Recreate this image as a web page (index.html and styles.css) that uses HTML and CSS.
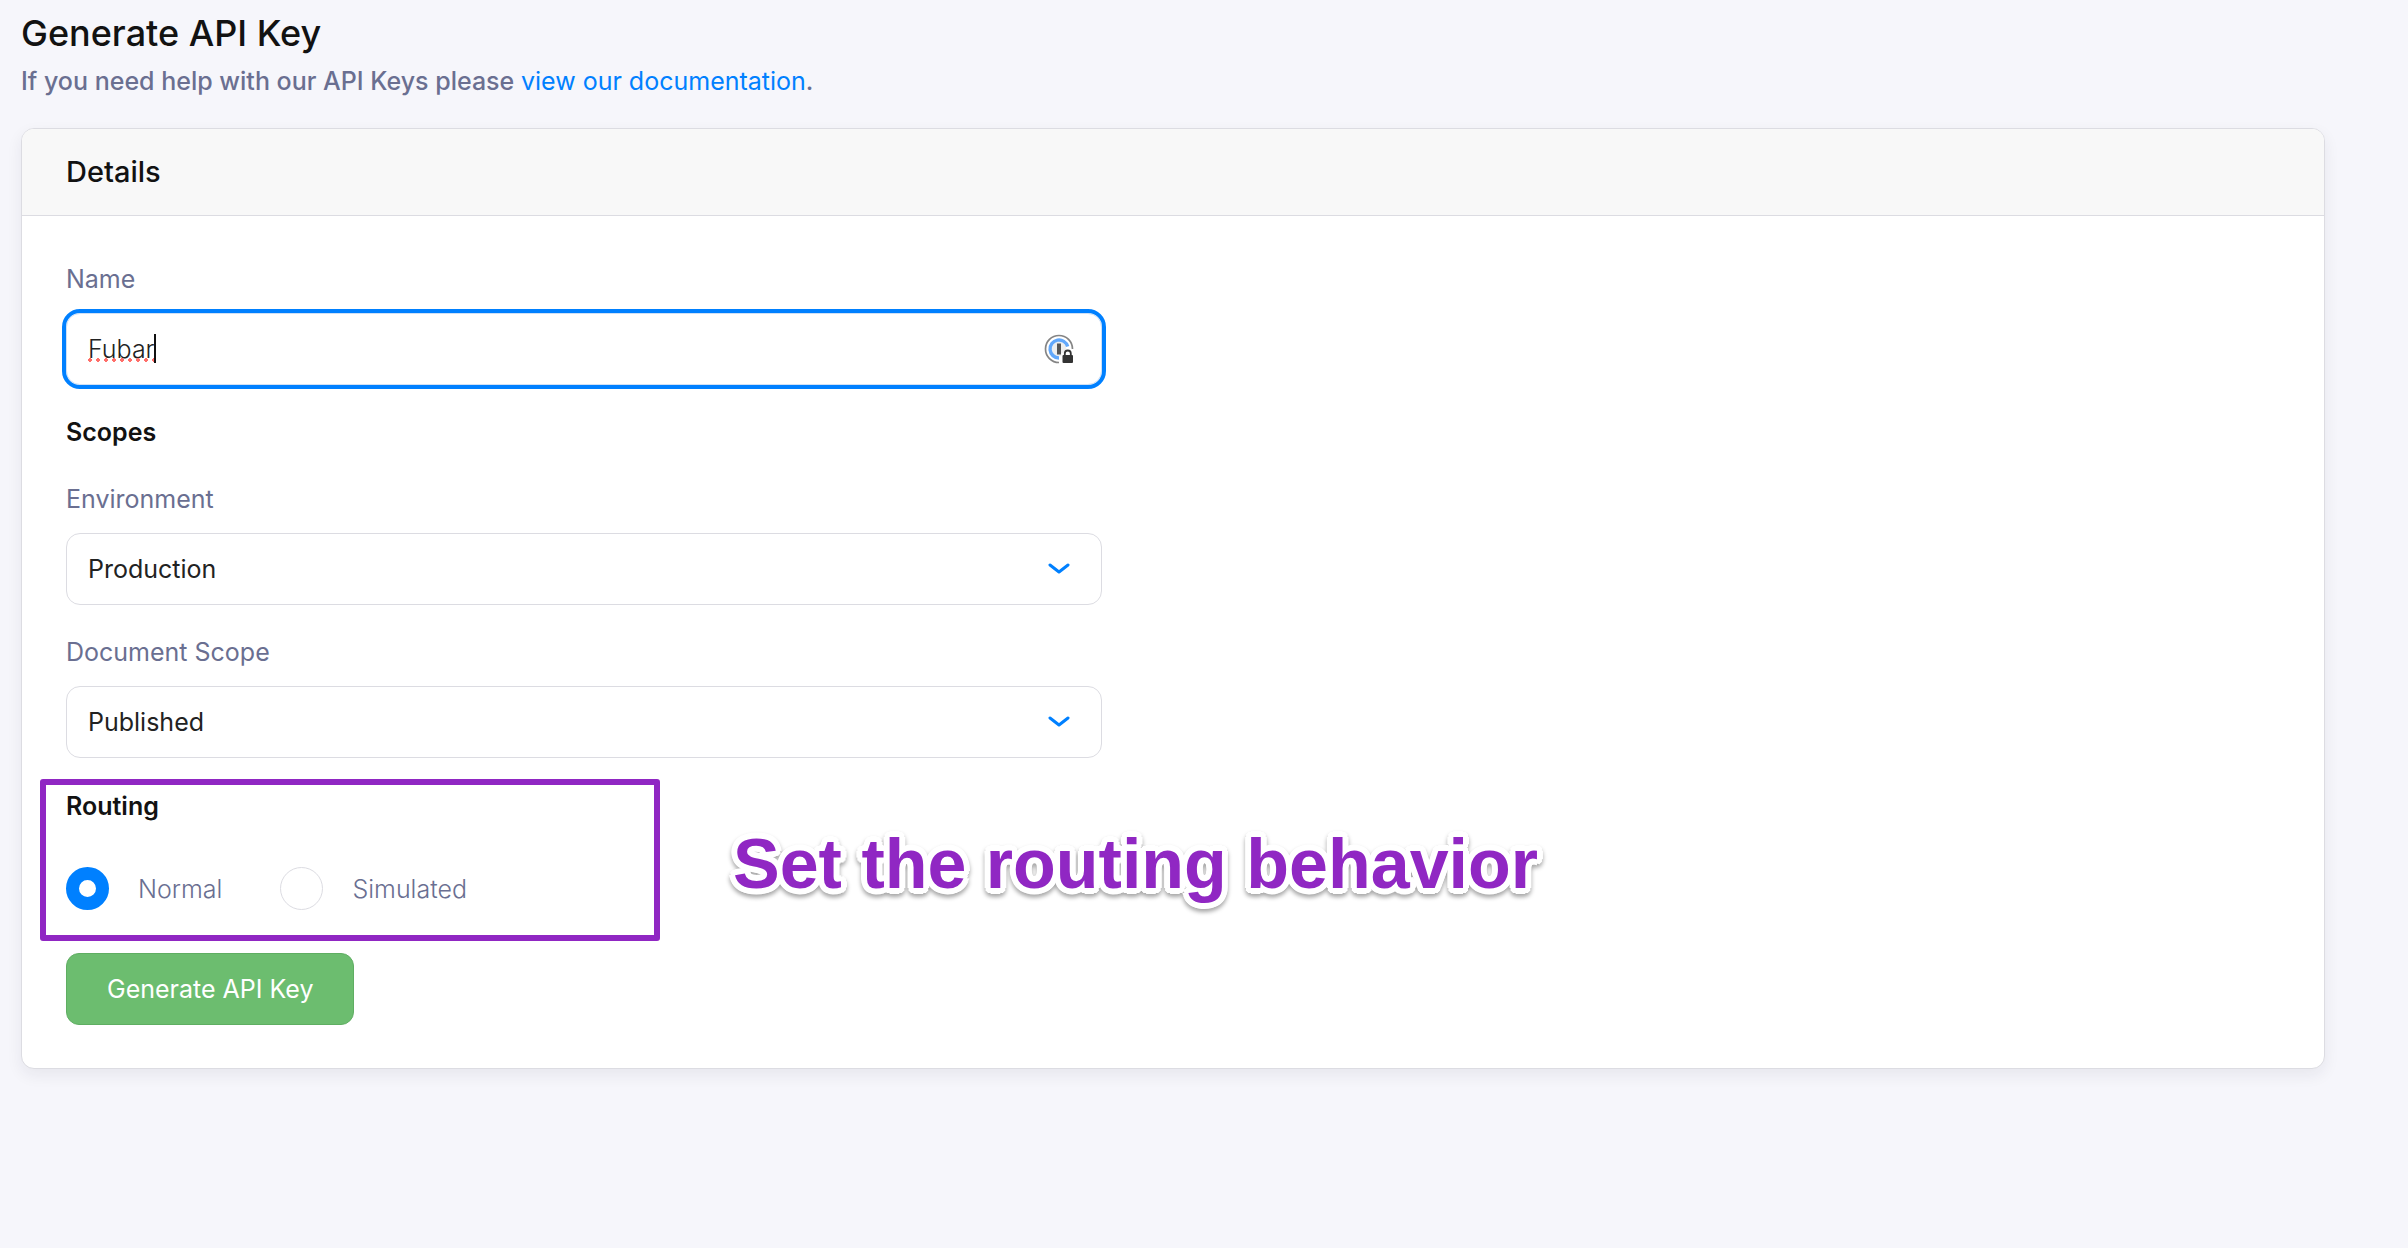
FILE: index.html
```html
<!DOCTYPE html>
<html lang="en">
<head>
<meta charset="utf-8">
<title>Generate API Key</title>
<link rel="stylesheet" href="styles.css">
</head>
<body>
<main class="page">
  <header class="intro">
    <h1>Generate API Key</h1>
    <p>If you need help with our API Keys please <a href="#">view our documentation</a>.</p>
  </header>
  <section class="card">
    <h2 class="card-header">Details</h2>
    <form class="card-body">
      <div class="field">
        <label for="name">Name</label>
        <div class="control">
          <input class="box name-input" id="name" type="text" value="Fubar">
          <span class="spelling-mark"></span>
          <svg class="password-icon" viewBox="0 0 30 30" aria-hidden="true">
            <path d="M15 28.500A13.500 13.500 0 1 1 28.500 15" fill="none" stroke="#858585" stroke-width="1.700"/>
            <circle cx="15" cy="15" r="7.500" fill="#eee"/>
            <path d="M15 24A9 9 0 1 1 23.700 12.500" fill="none" stroke="#62a8fb" stroke-width="3.400"/>
            <rect x="13" y="9.500" width="4" height="11" fill="#555"/>
            <rect x="17.500" y="19" width="12.500" height="11" fill="#fff"/>
            <path d="M20.800 21v-1.500a3 3 0 0 1 6 0V21" fill="#fff" stroke="#333" stroke-width="1.800"/>
            <rect x="18.500" y="21" width="10.500" height="8" rx="1" fill="#333"/>
          </svg>
        </div>
      </div>
      <h3>Scopes</h3>
      <div class="field">
        <label for="environment">Environment</label>
        <div class="control">
          <select class="box" id="environment"><option>Production</option></select>
          <svg class="chevron" viewBox="0 0 22 12" aria-hidden="true"><path d="M2 2l9 7 9-7"/></svg>
        </div>
      </div>
      <div class="field">
        <label for="scope">Document Scope</label>
        <div class="control">
          <select class="box" id="scope"><option>Published</option></select>
          <svg class="chevron" viewBox="0 0 22 12" aria-hidden="true"><path d="M2 2l9 7 9-7"/></svg>
        </div>
      </div>
      <div class="routing" role="radiogroup" aria-labelledby="routing-title">
        <h3 id="routing-title">Routing</h3>
        <div class="options">
          <label class="option"><input type="radio" name="routing" checked>Normal</label>
          <label class="option"><input type="radio" name="routing">Simulated</label>
        </div>
        <div class="highlight"></div>
        <p class="callout">Set the routing behavior</p>
      </div>
      <button class="submit" type="submit">Generate API Key</button>
    </form>
  </section>
</main>
</body>
</html>
```
FILE: styles.css
```css
* { box-sizing: border-box; }

body {
  margin: 0;
  background: #f6f6fb;
  color: #121212;
  font: 400 25px/40px Inter, "Liberation Sans", sans-serif;
}

h1, h2, h3, p { margin: 0; }

.page { padding: 13px 83px 40px 21px; }

h1 { font-size: 36px; line-height: 40px; font-weight: 500; }

.intro {
  display: flex;
  flex-direction: column;
  gap: 8px;
  margin-bottom: 27px;
}
.intro p { color: #6a6f91; font-weight: 500; }
.intro a { color: #0080ff; font-weight: 400; text-decoration: none; }

.card {
  background: #fff;
  border: 1px solid #dcdce2;
  border-radius: 13px;
  box-shadow: 0 6px 16px rgba(30, 30, 60, 0.07);
}

.card-header {
  padding: 23px 44px;
  background: #f8f8f8;
  border-bottom: 1px solid #dcdce2;
  border-radius: 12px 12px 0 0;
  font-size: 29px;
  line-height: 40px;
  font-weight: 500;
}

.card-body {
  display: flex;
  flex-direction: column;
  gap: 27px;
  width: 50%;
  padding: 43px 71px 43px 44px;
}

h3 { font-size: 25px; line-height: 40px; font-weight: 600; }

.field {
  display: flex;
  flex-direction: column;
  gap: 14px;
  color: #6a6f91;
}

.control { position: relative; display: flex; }

.box {
  width: 100%;
  height: 72px;
  padding: 0 21px;
  border: 1px solid #dcdce2;
  border-radius: 14px;
  background: #fff;
  color: #222;
  font: inherit;
  appearance: none;
}

/* the background layer is the text caret */
.name-input {
  font-weight: 300;
  border-color: #cfe0f5;
  outline: 4px solid #0080ff;
  outline-offset: 0;
  background: linear-gradient(#111, #111) 87px 20px / 2px 29px no-repeat #fff;
}

.spelling-mark {
  position: absolute;
  left: 22px;
  top: 45px;
  width: 66px;
  height: 5px;
  background: radial-gradient(circle at 2px 2px, #ff6f6a 2px, transparent 2px) 0 0 / 8px 5px repeat-x;
}

.password-icon {
  position: absolute;
  right: 28px;
  top: 21px;
  width: 30px;
  height: 30px;
}

.chevron {
  position: absolute;
  right: 32px;
  top: 30px;
  width: 22px;
  height: 12px;
  fill: none;
  stroke: #0080ff;
  stroke-width: 3;
  stroke-linecap: round;
  stroke-linejoin: round;
  pointer-events: none;
}

.routing {
  position: relative;
  display: flex;
  flex-direction: column;
  gap: 41px;
  margin: 1px 0 16px;
}

.options { display: flex; gap: 58px; }

.option {
  display: flex;
  align-items: center;
  gap: 29px;
  color: #6a6f91;
  font-weight: 300;
}

.option input {
  appearance: none;
  width: 43px;
  height: 43px;
  margin: 0;
  border: 1px solid #dcdce2;
  border-radius: 50%;
  background: #fff;
}
.option input:checked { border: 13px solid #0080ff; }

.highlight {
  position: absolute;
  left: -26px;
  top: -7px;
  width: 620px;
  height: 162px;
  border: 6px solid #9027c3;
  border-radius: 3px;
  pointer-events: none;
}

/* a ring of hard shadows makes the white outline with round corners */
.callout {
  position: absolute;
  left: 667px;
  top: 38px;
  color: #9027c3;
  font: 700 70px/80px "Liberation Sans", Arial, sans-serif;
  white-space: nowrap;
  text-shadow:
    6px 0 #fff, 5px 3px #fff, 4px 4px #fff, 3px 5px #fff,
    0 6px #fff, -3px 5px #fff, -4px 4px #fff, -5px 3px #fff,
    -6px 0 #fff, -5px -3px #fff, -4px -4px #fff, -3px -5px #fff,
    0 -6px #fff, 3px -5px #fff, 4px -4px #fff, 5px -3px #fff,
    3px 0 #fff, -3px 0 #fff, 0 3px #fff, 0 -3px #fff;
  filter: drop-shadow(0 3px 2px rgba(0, 0, 0, 0.35));
}

.submit {
  align-self: flex-start;
  height: 72px;
  padding: 0 40px;
  border: 1px solid #5fae62;
  border-radius: 13px;
  background: #6cbd6f;
  color: #fff;
  font: inherit;
}
```
